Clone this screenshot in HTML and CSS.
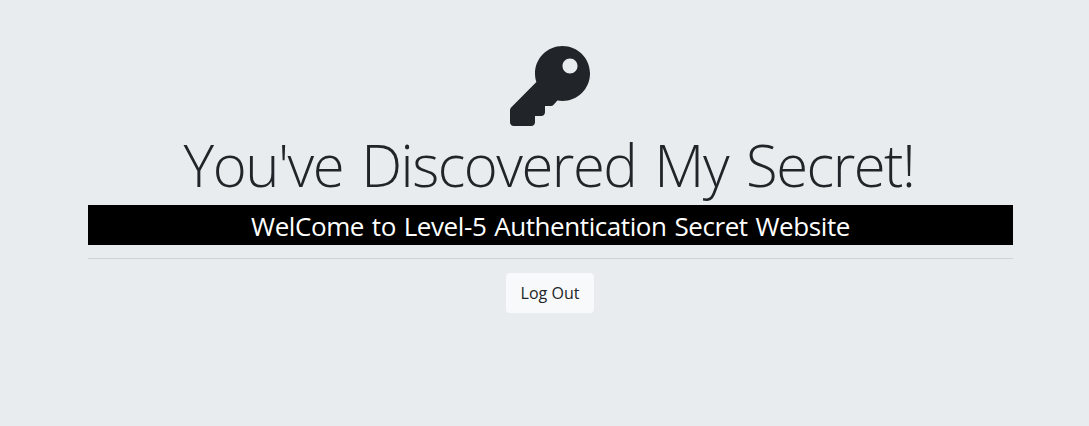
FILE: index.html
```html
<!DOCTYPE html>
<html lang="en">
<head>
<meta charset="utf-8">
<title>Secrets</title>
<link rel="stylesheet" href="styles.css">
</head>
<body>
<main class="container">
  <svg class="key" viewBox="0 0 512 512" aria-hidden="true"><path d="M512 176.001C512 273.203 433.202 352 336 352c-11.22 0-22.19-1.062-32.827-3.069l-24.012 27.014A23.999 23.999 0 0 1 261.223 384H224v40c0 13.255-10.745 24-24 24h-40v40c0 13.255-10.745 24-24 24H24c-13.255 0-24-10.745-24-24v-78.059c0-6.365 2.529-12.47 7.029-16.971l161.802-161.802C163.108 213.814 160 195.271 160 176 160 78.798 238.797.001 335.999 0 433.488-.001 512 78.511 512 176.001zM336 128c0 26.51 21.49 48 48 48s48-21.49 48-48-21.49-48-48-48-48 21.49-48 48z"/></svg>
  <h1 class="title">You've Discovered My Secret!</h1>
  <p class="banner">WelCome to Level-5 Authentication Secret Website</p>
  <hr class="rule">
  <a class="button" href="#">Log Out</a>
</main>
</body>
</html>
```
FILE: styles.css
```css
* { box-sizing: border-box; }
body {
  margin: 0;
  min-height: 426px;
  background: #e8ecef;
  color: #212529;
  font-family: "Open Sans", "Noto Sans", sans-serif;
}
.container {
  width: 925px;
  margin-left: 88px;
  padding-top: 46px;
  display: flex;
  flex-direction: column;
  align-items: center;
}
.key { display: block; width: 80px; height: 80px; margin-right: 1px; fill: #212529; }
.title {
  margin: 3px 3px 4px 0;
  height: 72px;
  font-size: 58px;
  font-weight: 300;
  line-height: 72px;
  letter-spacing: -1.5px;
  word-spacing: 4.5px;
  white-space: nowrap;
}
.banner {
  width: 100%;
  height: 40px;
  margin: 0;
  background: #000;
  color: #fff;
  font-size: 26px;
  line-height: 42px;
  letter-spacing: -0.42px;
  word-spacing: 1.5px;
  text-align: center;
  white-space: nowrap;
}
.rule { width: 100%; margin: 13px 0 14px; border: 0; border-top: 1px solid #d1d4d7; }
.button {
  width: 88px;
  height: 40px;
  margin-right: 1px;
  border-radius: 4px;
  background: #f8f9fa;
  color: #212529;
  font-size: 16px;
  line-height: 40px;
  text-align: center;
  text-decoration: none;
}
```
